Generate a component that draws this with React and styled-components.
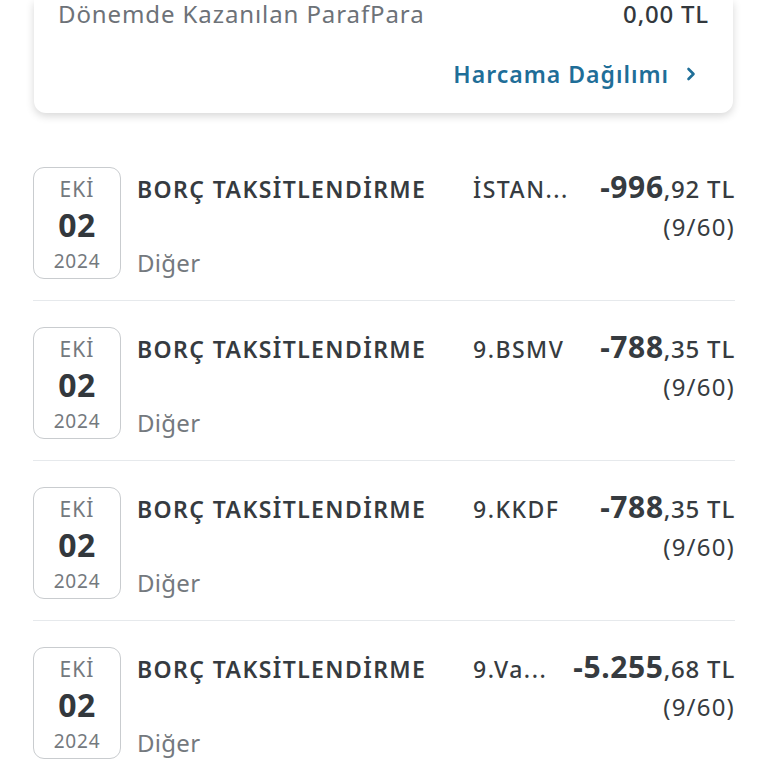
import styled, { createGlobalStyle } from 'styled-components';

const GlobalStyle = createGlobalStyle`
  html, body {
    margin: 0;
    padding: 0;
    background: #ffffff;
    font-family: "Noto Sans", "Open Sans", sans-serif;
  }
`;

const Page = styled.div`
  width: 768px;
  height: 768px;
  overflow: hidden;
  background: #ffffff;
`;

const SummaryCard = styled.div`
  margin: 0 35px 0 34px;
  background: #ffffff;
  border-radius: 0 0 12px 12px;
  box-shadow: 0 3px 8px rgba(0, 0, 0, 0.16);
  padding: 0 24px 0 24px;
  height: 113px;
  box-sizing: border-box;
  display: flex;
  flex-direction: column;
`;

const SummaryRow = styled.div`
  display: flex;
  justify-content: space-between;
  align-items: center;
  height: 26px;
  font-size: 24px;
`;

const SummaryLabel = styled.span`
  color: #6d7278;
  letter-spacing: 0.9px;
`;

const SummaryValue = styled.span`
  color: #33383d;
  font-weight: 500;
  letter-spacing: 0.8px;
`;

const LinkRow = styled.div`
  display: flex;
  justify-content: flex-end;
  align-items: center;
  margin-top: 32px;
  padding-right: 12px;
  gap: 16px;
  color: #1f6e98;
  font-weight: 600;
  font-size: 23px;
  letter-spacing: 1px;
`;

const List = styled.div`
  padding: 28px 33px 0 33px;
`;

const Row = styled.div`
  display: flex;
  padding: 26px 0 21px 0;
  border-bottom: 1px solid #e6e9ec;
`;

const DateBox = styled.div`
  width: 88px;
  height: 112px;
  box-sizing: border-box;
  border: 1px solid #c9cccf;
  border-radius: 11px;
  display: flex;
  flex-direction: column;
  align-items: center;
  padding-top: 7px;
`;

const Month = styled.div`
  font-size: 21px;
  line-height: 28px;
  letter-spacing: 1px;
  color: #74797e;
`;

const Day = styled.div`
  font-size: 32px;
  line-height: 43px;
  font-weight: 700;
  letter-spacing: 0.5px;
  color: #33383d;
`;

const Year = styled.div`
  font-size: 19px;
  line-height: 30px;
  letter-spacing: 0.8px;
  color: #74797e;
`;

const Body = styled.div`
  flex: 1;
  min-width: 0;
  padding-left: 16px;
  display: flex;
  flex-direction: column;
`;

const TopLine = styled.div`
  display: flex;
  align-items: baseline;
  margin-top: 4px;
  line-height: 32px;
`;

const Title = styled.div`
  width: 336px;
  flex-shrink: 0;
  font-size: 23px;
  font-weight: 600;
  letter-spacing: 1.4px;
  color: #363b40;
`;

const Merchant = styled.div`
  flex: 1;
  min-width: 0;
  white-space: nowrap;
  overflow: hidden;
  margin-right: 18px;
  font-size: 23px;
  font-weight: 500;
  letter-spacing: 1.5px;
  color: #363b40;
`;

const Amount = styled.div`
  font-size: 24px;
  font-weight: 500;
  letter-spacing: 0.8px;
  color: #363b40;
  white-space: nowrap;
`;

const AmountMain = styled.span`
  font-size: 30px;
  font-weight: 700;
  letter-spacing: 0.6px;
`;

const Installment = styled.div`
  align-self: flex-end;
  font-size: 24px;
  letter-spacing: 1.2px;
  color: #363b40;
  line-height: 30px;
  margin-top: 7px;
`;

const Category = styled.div`
  margin-top: auto;
  font-size: 24px;
  letter-spacing: 0.3px;
  color: #74797e;
  line-height: 30px;
  margin-bottom: 1px;
`;

const Chevron = () => (
  <svg width="12" height="16" viewBox="0 0 12 16" fill="none">
    <path d="M3.5 3 L8.5 8 L3.5 13" stroke="#1f6e98" strokeWidth="2.6" strokeLinecap="round" strokeLinejoin="round" />
  </svg>
);

const items = [
  { merchant: 'İSTAN...', main: '-996', rest: ',92 TL' },
  { merchant: '9.BSMV', main: '-788', rest: ',35 TL' },
  { merchant: '9.KKDF', main: '-788', rest: ',35 TL' },
  { merchant: '9.Va...', main: '-5.255', rest: ',68 TL' },
];

export default function App() {
  return (
    <Page>
      <GlobalStyle />
      <SummaryCard>
        <SummaryRow>
          <SummaryLabel>Dönemde Kazanılan ParafPara</SummaryLabel>
          <SummaryValue>0,00 TL</SummaryValue>
        </SummaryRow>
        <LinkRow>
          Harcama Dağılımı
          <Chevron />
        </LinkRow>
      </SummaryCard>
      <List>
        {items.map((it, i) => (
          <Row key={i}>
            <DateBox>
              <Month>EKİ</Month>
              <Day>02</Day>
              <Year>2024</Year>
            </DateBox>
            <Body>
              <TopLine>
                <Title>BORÇ TAKSİTLENDİRME</Title>
                <Merchant>{it.merchant}</Merchant>
                <Amount>
                  <AmountMain>{it.main}</AmountMain>
                  {it.rest}
                </Amount>
              </TopLine>
              <Installment>(9/60)</Installment>
              <Category>Diğer</Category>
            </Body>
          </Row>
        ))}
      </List>
    </Page>
  );
}
